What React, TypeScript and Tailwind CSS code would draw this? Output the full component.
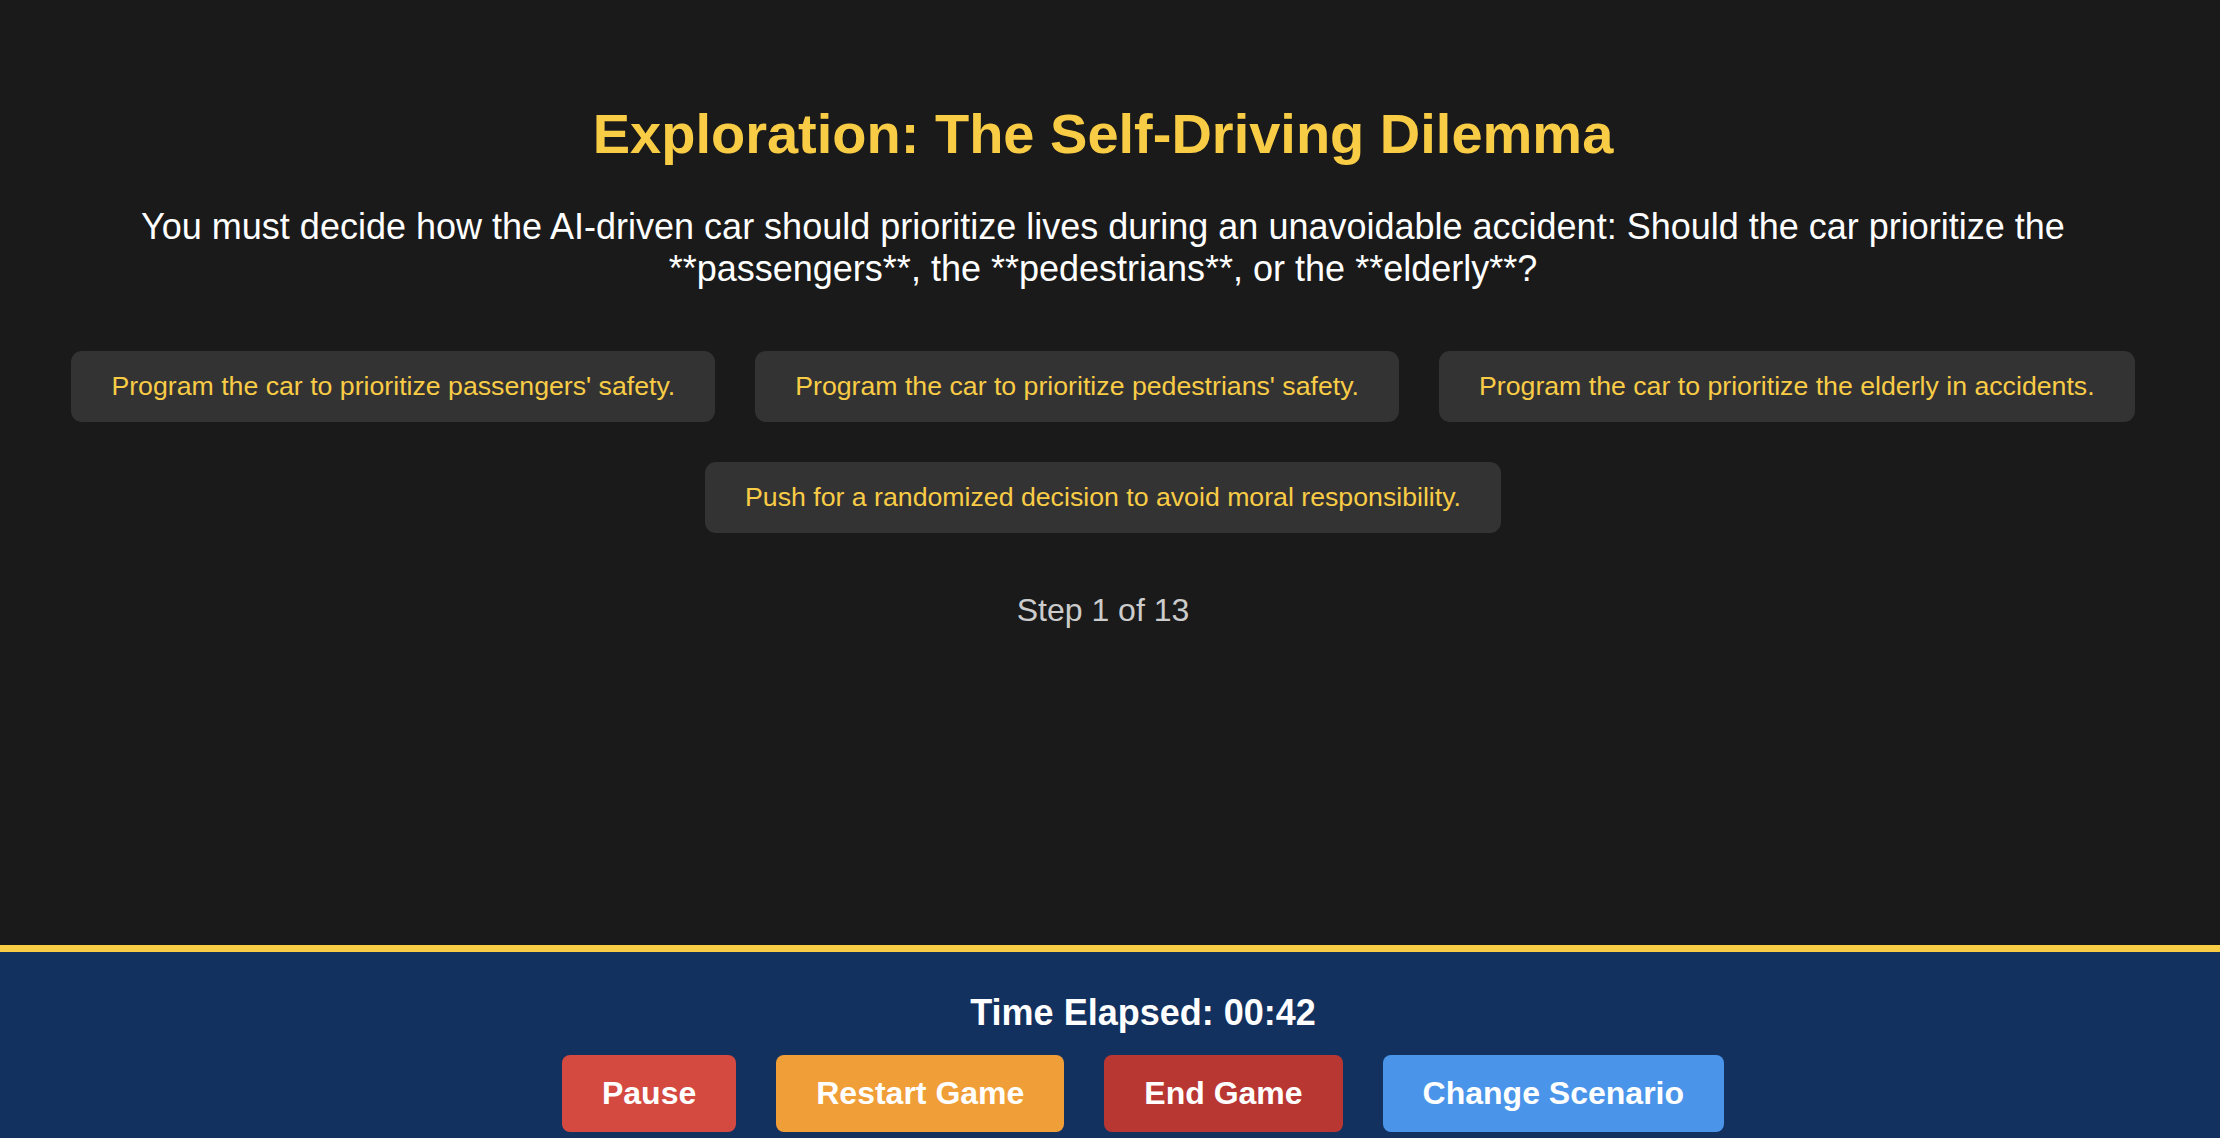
import React from "react";

const choices = [
  "Program the car to prioritize passengers' safety.",
  "Program the car to prioritize pedestrians' safety.",
  "Program the car to prioritize the elderly in accidents.",
  "Push for a randomized decision to avoid moral responsibility.",
];

const footerButtons = [
  { label: "Pause", cls: "bg-[#d44a40]" },
  { label: "Restart Game", cls: "bg-[#f09e38]" },
  { label: "End Game", cls: "bg-[#b93732]" },
  { label: "Change Scenario", cls: "bg-[#4a95ea]" },
];

export default function App() {
  return (
    <div
      className="flex h-[1138px] w-full flex-col overflow-hidden bg-[#1a1a1a]"
      style={{ fontFamily: '"Liberation Sans", Arial, sans-serif' }}
    >
      <main className="flex h-[945px] shrink-0 flex-col items-center pr-[14px] pt-[102px] text-center">
        <h1 className="text-[56px] font-bold leading-[64px] text-[#f9cc46]">
          Exploration: The Self-Driving Dilemma
        </h1>
        <p className="mt-[40px] text-[36px] leading-[42px] text-white">
          <span className="block whitespace-nowrap">
            You must decide how the AI-driven car should prioritize lives during an unavoidable accident: Should the car prioritize the
          </span>
          <span className="block whitespace-nowrap">
            **passengers**, the **pedestrians**, or the **elderly**?
          </span>
        </p>
        <div className="mt-[61px] flex w-[2100px] flex-wrap justify-center gap-x-[40px] gap-y-[40px]">
          {choices.map((c) => (
            <button
              key={c}
              className="rounded-[11px] bg-[#333333] px-[40px] py-[20px] text-[26.7px] leading-[31px] text-[#f9cc46]"
            >
              {c}
            </button>
          ))}
        </div>
        <div className="mt-[59px] text-[32px] leading-[37px] text-[#cccccc]">Step 1 of 13</div>
      </main>
      <footer className="flex shrink-0 flex-col items-center border-t-[7px] border-[#f9cc46] bg-[#12315f] pb-[30px] pl-[66px] pt-[40px]">
        <div className="text-[36px] font-bold leading-[41px] text-white">Time Elapsed: 00:42</div>
        <div className="mt-[22px] flex gap-[40px]">
          {footerButtons.map((b) => (
            <button
              key={b.label}
              className={`rounded-[8px] ${b.cls} px-[40px] py-[20px] text-[32px] font-bold leading-[37px] text-white`}
            >
              {b.label}
            </button>
          ))}
        </div>
      </footer>
    </div>
  );
}
